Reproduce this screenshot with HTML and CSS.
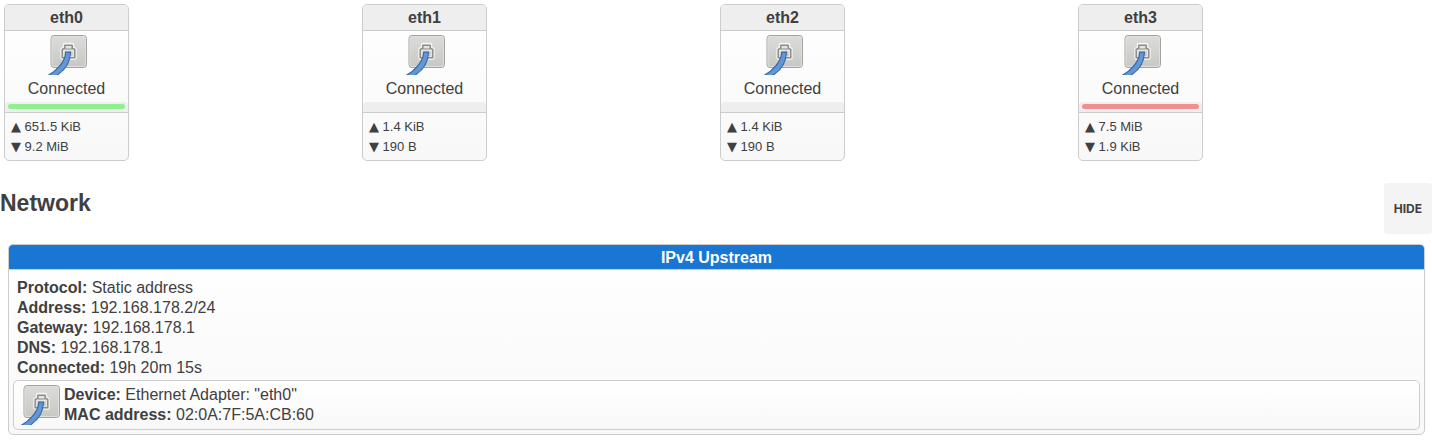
FILE: index.html
```html
<!DOCTYPE html>
<html lang="en">
  <head>
    <meta charset="utf-8" />
    <title>Network status</title>
    <link rel="stylesheet" href="styles.css">
  </head>
  <body>
    <!-- Ethernet icon, shared by all ports -->
    <svg class="icon-defs" width="0" height="0" aria-hidden="true">
      <defs>
        <linearGradient id="plate" x1="0" y1="0" x2="0" y2="1">
          <stop offset="0" stop-color="#dcddda" />
          <stop offset="1" stop-color="#c6c8c4" />
        </linearGradient>
      </defs>
      <symbol id="ethernet" viewBox="0 0 40 40">
        <rect x="4" y="0.5" width="35.5" height="32" rx="3" fill="url(#plate)" stroke="#a2a39f" />
        <rect x="5" y="1.5" width="33.5" height="30" rx="2" fill="none" stroke="#dfe0dd" />
        <path d="M15 23V14L17.5 13V9.5H25.5V13L28 14V23Z" fill="#f4f4f2" stroke="#f4f4f2" stroke-width="3.4" stroke-linejoin="round" />
        <path d="M15.2 22.8V14.5L17.8 13.2V10.2H25.2V13.2L27.8 14.5V22.8Z" fill="#e4e5e2" stroke="#8b8d87" stroke-width="1.5" stroke-linejoin="round" />
        <path d="M17.8 14H25.2" stroke="#8b8d87" />
        <path d="M17.5 21V16.5H25.5V21Z" fill="#c4c5c1" />
        <path d="M18.8 17.2H23.4C23.2 26 18.5 35 9.5 40.5H1C10 35.5 18 27 18.8 17.2Z" fill="#6396d2" stroke="#3668a8" stroke-width="1.2" />
      </symbol>
    </svg>

    <div class="ports">
      <div class="port">
        <div class="port-name">eth0</div>
        <div class="port-state">
          <svg class="icon"><use href="#ethernet" /></svg>
          <div>Connected</div>
        </div>
        <div class="port-zone"><div class="zone lan"></div></div>
        <div class="port-stats">
          <span class="arrow">▲</span> 651.5 KiB<br />
          <span class="arrow">▼</span> 9.2 MiB
        </div>
      </div>
      <div class="port">
        <div class="port-name">eth1</div>
        <div class="port-state">
          <svg class="icon"><use href="#ethernet" /></svg>
          <div>Connected</div>
        </div>
        <div class="port-zone"></div>
        <div class="port-stats">
          <span class="arrow">▲</span> 1.4 KiB<br />
          <span class="arrow">▼</span> 190 B
        </div>
      </div>
      <div class="port">
        <div class="port-name">eth2</div>
        <div class="port-state">
          <svg class="icon"><use href="#ethernet" /></svg>
          <div>Connected</div>
        </div>
        <div class="port-zone"></div>
        <div class="port-stats">
          <span class="arrow">▲</span> 1.4 KiB<br />
          <span class="arrow">▼</span> 190 B
        </div>
      </div>
      <div class="port">
        <div class="port-name">eth3</div>
        <div class="port-state">
          <svg class="icon"><use href="#ethernet" /></svg>
          <div>Connected</div>
        </div>
        <div class="port-zone"><div class="zone wan"></div></div>
        <div class="port-stats">
          <span class="arrow">▲</span> 7.5 MiB<br />
          <span class="arrow">▼</span> 1.9 KiB
        </div>
      </div>
    </div>

    <div class="section-title">
      <h3>Network</h3>
      <button type="button" class="hide-button">HIDE</button>
    </div>

    <div class="network">
      <div class="network-head">IPv4 Upstream</div>
      <div class="network-body">
        <div class="details">
          <strong>Protocol:</strong> Static address<br />
          <strong>Address:</strong> 192.168.178.2/24<br />
          <strong>Gateway:</strong> 192.168.178.1<br />
          <strong>DNS:</strong> 192.168.178.1<br />
          <strong>Connected:</strong> 19h 20m 15s
        </div>
        <div class="device">
          <svg class="icon"><use href="#ethernet" /></svg>
          <div>
            <strong>Device:</strong> Ethernet Adapter: "eth0"<br />
            <strong>MAC address:</strong> 02:0A:7F:5A:CB:60
          </div>
        </div>
      </div>
    </div>
  </body>
</html>
```

FILE: styles.css
```css
body {
  margin: 0;
  background: #fff;
  color: #404040;
  font-family: "Liberation Sans", Arial, sans-serif;
  font-size: 16px;
  line-height: 20px;
}

.icon-defs {
  position: absolute;
}

.icon {
  display: block;
  flex: none;
  width: 40px;
  height: 40px;
}

/* Port boxes */
.ports {
  display: grid;
  grid-template-columns: repeat(4, 1fr);
}

.port {
  width: 123px;
  margin: 4px;
  border: 1px solid #ccc;
  border-radius: 5px;
  background: linear-gradient(#fff, #f8f8f8);
  overflow: hidden;
}

.port-name {
  padding: 3px 0 2px;
  border-bottom: 1px solid #ccc;
  background: #eee;
  font-weight: bold;
  text-align: center;
}

.port-state {
  display: flex;
  flex-direction: column;
  align-items: center;
  gap: 4px;
  padding: 4px 0 3px;
}

.port-zone {
  height: 5px;
  padding: 2px 3px 3px;
  border-bottom: 1px solid #ccc;
  border-radius: 4px 4px 0 0;
  background: #eee;
}

.zone {
  height: 5px;
  border-radius: 3px;
}

.lan {
  background: #90f090;
}

.wan {
  background: #f09090;
}

.port-stats {
  padding: 4px 6px 3px;
  font-size: 13px;
}

.arrow {
  font-family: "DejaVu Sans", sans-serif;
}

/* Section title */
.section-title {
  display: flex;
  align-items: center;
  justify-content: space-between;
  margin-top: 18px;
}

.section-title h3 {
  margin: 0 0 12px;
  font-size: 23px;
  line-height: 28px;
}

.hide-button {
  padding: 18px 10px;
  border: none;
  border-radius: 3px;
  background: #f4f4f4;
  color: #404040;
  font-family: Inter, sans-serif;
  font-size: 12px;
  font-weight: bold;
  line-height: 15px;
}

/* Network box */
.network {
  margin: 10px 7px 8px 8px;
  border: 1px solid #ccc;
  border-radius: 5px;
  background: linear-gradient(#fff, #f8f8f8);
  overflow: hidden;
}

.network-head {
  padding: 3px 0 1px;
  border-bottom: 1px solid #ccc;
  background: #1976d2;
  color: #fff;
  font-weight: bold;
  text-align: center;
}

.network-body {
  padding: 8px 4px 4px;
}

.details {
  padding: 0 4px 2px;
}

.device {
  display: flex;
  align-items: center;
  gap: 4px;
  padding: 4px 6px;
  border: 1px solid #ccc;
  border-radius: 5px;
  background: linear-gradient(#fff, #f8f8f8);
}
```
